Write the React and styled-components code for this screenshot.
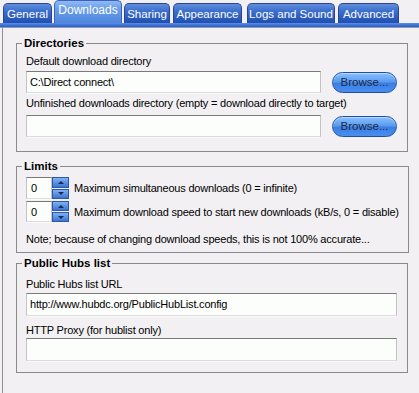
import styled, { createGlobalStyle } from 'styled-components'

const Global = createGlobalStyle`
    html, body {
        margin: 0;
        padding: 0;
        background: #f2f0f3;
    }
    * {
        box-sizing: border-box;
    }
`

const Page = styled.div`
    width: 419px;
    height: 393px;
    overflow: hidden;
    font-family: "Liberation Sans", Arial, sans-serif;
    font-size: 11px;
    letter-spacing: -0.2px;
    color: #000;
    background: #f2f0f3;
    display: flex;
    flex-direction: column;
`

const TabBar = styled.div`
    display: flex;
    align-items: flex-end;
    height: 23px;
    padding-left: 3px;
    gap: 2px;
`

const Tab = styled.div`
    width: ${p => p.w}px;
    margin-right: ${p => p.mr || 0}px;
    height: ${p => p.active ? 23 : 20}px;
    border: 1px solid ${p => p.active ? '#3b63b8' : '#2b4690'};
    border-bottom: none;
    border-radius: 5px 5px 0 0;
    background: ${p => p.active
        ? 'linear-gradient(#8fbaf4 0%, #6a9fea 35%, #4f86de 100%)'
        : 'linear-gradient(#5f8fdc 0%, #3a6dcc 40%, #1f4fb0 100%)'};
    color: #fff;
    display: flex;
    justify-content: center;
    padding-top: ${p => p.active ? 3 : 4}px;
    line-height: 13px;
    font-size: ${p => p.active ? 12 : 11.5}px;
    letter-spacing: 0;
    white-space: nowrap;
`

const Strip = styled.div`
    height: 5px;
    background: linear-gradient(#5b8fe6, #3c6fd2 60%, #2f5fc0);
    border-bottom: 1px solid #8e9ab8;
`

const Panel = styled.div`
    flex: 1;
    margin-left: 2px;
    border-left: 1px solid #8f8f8f;
    padding: 9px 0 0 13px;
    display: flex;
    flex-direction: column;
`

const Group = styled.fieldset`
    width: 392px;
    margin: ${p => p.mt || 0}px 0 0 0;
    border: 1px solid #8a8a8a;
    padding: ${p => p.pt}px 9px ${p => p.pb}px 9px;
    display: flex;
    flex-direction: column;
`

const Legend = styled.legend`
    font-weight: bold;
    font-size: 11.5px;
    letter-spacing: 0;
    line-height: 13px;
    padding: 0 2px;
    margin-left: -4px;
`

const Label = styled.div`
    line-height: 13px;
    margin-top: ${p => p.mt || 0}px;
    margin-bottom: ${p => p.mb || 0}px;
    white-space: nowrap;
`

const Row = styled.div`
    display: flex;
    align-items: center;
    gap: ${p => p.gap || 11}px;
    margin-top: ${p => p.mt || 0}px;
    white-space: nowrap;
`

const Edit = styled.div`
    width: ${p => p.w}px;
    height: ${p => p.h || 22}px;
    background: #fbfefb;
    border-top: 1px solid #7a7a7a;
    border-left: 1px solid #c4c4c4;
    border-right: 1px solid #c4c4c4;
    border-bottom: 1px solid #dcdcdc;
    box-shadow: 0 2px 0 -1px #fafafa;
    padding: 4px 0 0 3px;
    line-height: 13px;
    white-space: nowrap;
    overflow: hidden;
`

const Browse = styled.button`
    width: 65px;
    height: 21px;
    border: 1px solid #1d4fa8;
    border-radius: 11px;
    background: linear-gradient(#8cc0fa 0%, #5b9cf0 45%, #3a7fe4 55%, #4a8ef0 100%);
    box-shadow: inset 0 1px 0 #b9dbff;
    font-family: inherit;
    font-size: 11.5px;
    color: #1c2a44;
    padding: 0;
    cursor: pointer;
`

const Spinner = styled.div`
    display: flex;
    height: ${p => p.h || 22}px;
`

const SpinBox = styled(Edit)`
    width: 26px;
    padding-left: 4px;
`

const SpinButtons = styled.div`
    width: 17px;
    display: flex;
    flex-direction: column;
    gap: 1px;
`

const SpinButton = styled.div`
    flex: 1;
    border: 1px solid #2c58a8;
    background: linear-gradient(#7fb1f2, #3c74d2);
    display: flex;
    align-items: center;
    justify-content: center;
`

const Arrow = styled.div`
    width: 0;
    height: 0;
    border-left: 3px solid transparent;
    border-right: 3px solid transparent;
    ${p => p.up
        ? 'border-bottom: 3px solid #1a2a50;'
        : 'border-top: 3px solid #1a2a50;'}
`

const tabs = [
    ['General', 49, 0],
    ['Downloads', 68, 0],
    ['Sharing', 46, 1],
    ['Appearance', 69, 3],
    ['Logs and Sound', 88, 1],
    ['Advanced', 61, 0],
]

function Spin({ h }) {
    return (
        <Spinner h={h}>
            <SpinBox h={h}>0</SpinBox>
            <SpinButtons>
                <SpinButton><Arrow up /></SpinButton>
                <SpinButton><Arrow /></SpinButton>
            </SpinButtons>
        </Spinner>
    )
}

export default function App() {
    return (
        <Page>
            <Global />
            <TabBar>
                {tabs.map(([name, w, mr]) => (
                    <Tab key={name} w={w} mr={mr} active={name === 'Downloads'}>{name}</Tab>
                ))}
            </TabBar>
            <Strip />
            <Panel>
                <Group pt={5} pb={14}>
                    <Legend>Directories</Legend>
                    <Label mb={3}>Default download directory</Label>
                    <Row>
                        <Edit w={295}>C:\Direct connect\</Edit>
                        <Browse>Browse...</Browse>
                    </Row>
                    <Label mt={4} mb={5}>Unfinished downloads directory (empty = download directly to target)</Label>
                    <Row>
                        <Edit w={295} />
                        <Browse>Browse...</Browse>
                    </Row>
                </Group>
                <Group mt={8} pt={4} pb={6}>
                    <Legend>Limits</Legend>
                    <Row gap={5}>
                        <Spin h={22} />
                        <span>Maximum simultaneous downloads (0 = infinite)</span>
                    </Row>
                    <Row gap={5} mt={2}>
                        <Spin h={21} />
                        <span>Maximum download speed to start new downloads (kB/s, 0 = disable)</span>
                    </Row>
                    <Label mt={11}>Note; because of changing download speeds, this is not 100% accurate...</Label>
                </Group>
                <Group mt={4} pt={8} pb={11}>
                    <Legend>Public Hubs list</Legend>
                    <Label mb={2}>Public Hubs list URL</Label>
                    <Edit w={371} h={23}>http://www.hubdc.org/PublicHubList.config</Edit>
                    <Label mt={8} mb={1}>HTTP Proxy (for hublist only)</Label>
                    <Edit w={371} h={23} />
                </Group>
            </Panel>
        </Page>
    )
}
